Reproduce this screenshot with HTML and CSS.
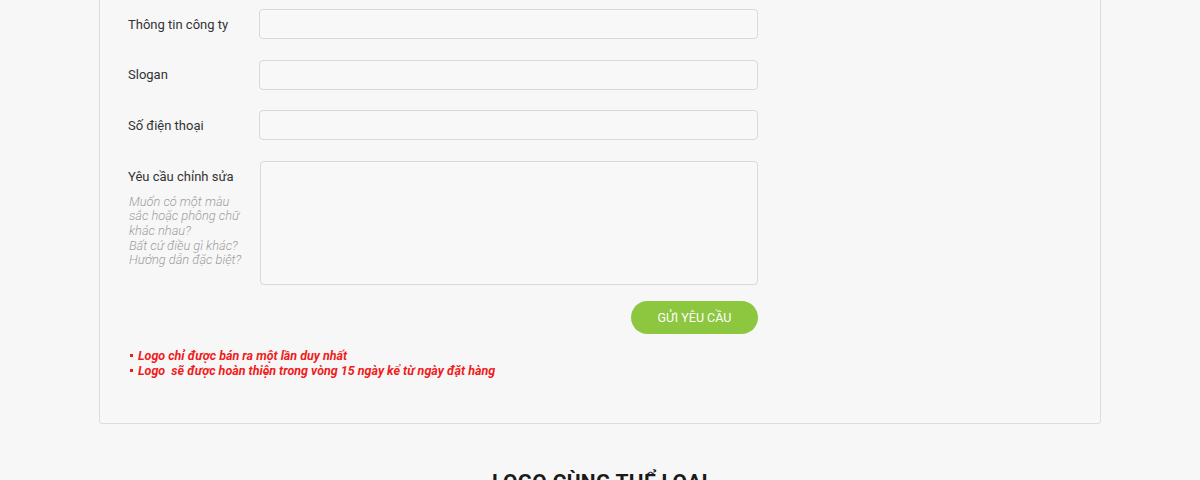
FILE: index.html
```html
<!DOCTYPE html>
<html lang="vi">
<head>
<meta charset="utf-8">
<title>Yêu cầu chỉnh sửa logo</title>
<link rel="stylesheet" href="styles.css">
</head>
<body>
<div class="page">
  <form class="card">
    <div class="row">
      <label class="label">Thông tin công ty</label>
      <input class="field" type="text">
    </div>
    <div class="row">
      <label class="label">Slogan</label>
      <input class="field" type="text">
    </div>
    <div class="row">
      <label class="label">Số điện thoại</label>
      <input class="field" type="text">
    </div>
    <div class="row row-area">
      <div class="label-col">
        <label class="label">Yêu cầu chỉnh sửa</label>
        <p class="hint">Muốn có một màu sắc hoặc phông chữ khác nhau?<br>Bất cứ điều gì khác?<br>Hướng dẫn đặc biệt?</p>
      </div>
      <textarea class="area"></textarea>
    </div>
    <div class="actions">
      <button class="btn" type="button">Gửi yêu cầu</button>
    </div>
    <ul class="notes">
      <li>Logo chỉ được bán ra một lần duy nhất</li>
      <li>Logo &nbsp;sẽ được hoàn thiện trong vòng 15 ngày kể từ ngày đặt hàng</li>
    </ul>
  </form>
  <h2 class="section-title">LOGO CÙNG THỂ LOẠI</h2>
</div>
</body>
</html>
```
FILE: styles.css
```css
* { box-sizing: border-box; }
html, body {
  margin: 0;
  background: #f7f7f7;
  font-family: Roboto, "Liberation Sans", sans-serif;
  color: #333;
  overflow: hidden;
}
.page {
  width: 1002px;
  margin: 0 auto;
}
.card {
  margin-top: -21px;
  border: 1px solid #dcdcdc;
  border-radius: 3px;
  padding: 29px 28px 45px 28px;
  background: #f7f7f7;
  display: flex;
  flex-direction: column;
}
.row {
  display: flex;
  align-items: center;
  margin-bottom: 20.5px;
}
.label {
  width: 131px;
  flex: none;
  font-size: 13px;
  color: #333;
}
.field {
  width: 499px;
  height: 30px;
  border: 1px solid #d9d9d9;
  border-radius: 4px;
  background: #f8f8f8;
  font: inherit;
}
.row-area {
  align-items: flex-start;
  margin-bottom: 16px;
}
.label-col {
  width: 132px;
  flex: none;
  padding-top: 8px;
  padding-right: 14px;
}
.label-col .label {
  display: block;
  width: auto;
}
.hint {
  margin: 11px 0 0 1px;
  font-size: 12.8px;
  line-height: 14.7px;
  font-style: italic;
  color: #9e9e9e;
  font-weight: 300;
}
.area {
  width: 498px;
  height: 124px;
  border: 1px solid #d9d9d9;
  border-radius: 4px;
  background: #f8f8f8;
  resize: none;
  font: inherit;
}
.actions {
  width: 630px;
  display: flex;
  justify-content: flex-end;
}
.btn {
  width: 127px;
  height: 33px;
  border: none;
  border-radius: 17px;
  background: #8dc63f;
  color: #fff;
  font-family: Roboto, "Liberation Sans", sans-serif;
  font-size: 12.5px;
  text-transform: uppercase;
  padding: 0;
}
.notes {
  list-style: none;
  margin: 14px 0 0 0;
  padding: 0;
  color: #f01c1c;
  font-size: 12.5px;
  font-style: italic;
  font-weight: 700;
  line-height: 15px;
}
.notes li::before {
  content: "";
  display: inline-block;
  width: 3px;
  height: 3px;
  background: #f01c1c;
  vertical-align: 3px;
  margin-left: 2px;
  margin-right: 5px;
}
.section-title {
  text-align: center;
  margin: 46px 0 0 0;
  font-size: 21px;
  font-weight: 700;
  color: #1a1a1a;
  letter-spacing: 0.3px;
}
```
